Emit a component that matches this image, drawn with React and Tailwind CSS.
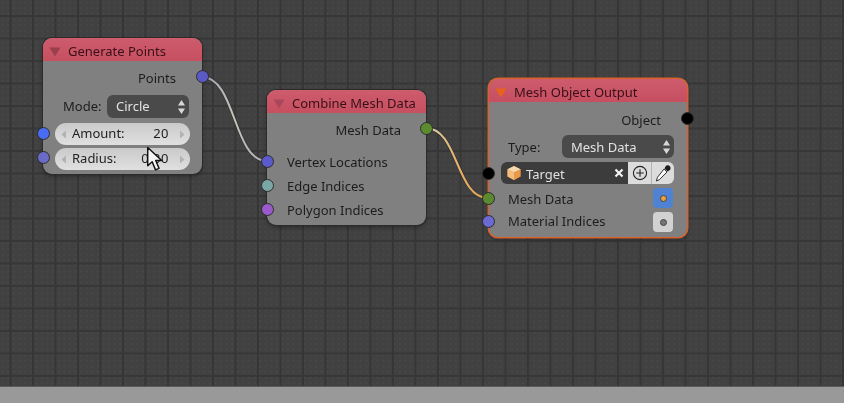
import React from 'react';

const font = { fontFamily: '"Noto Sans", "Open Sans", sans-serif' };

// free canvas: sockets sit on the node edge
const Socket = ({ side, y, color, nudge = 0 }) => (
  <span
    className={`absolute w-[13px] h-[13px] rounded-full border border-[#2c2c2c] ${side === 'left' ? 'left-[-6px]' : 'right-[-7px]'}`}
    style={{ top: y, background: color, marginLeft: nudge }}
  />
);

const NodeHeader = ({ title, triangle }) => (
  <div className="h-[23px] flex items-center pl-[6px] pt-[5px] rounded-t-[9px] bg-gradient-to-b from-[#cd5c6c] to-[#c64f60]">
    <svg width="12" height="10" viewBox="0 0 12 10" className="mr-[7px] shrink-0">
      <path d="M0.5 0.5 H11.5 L6 9.5 Z" fill={triangle} />
    </svg>
    <span className="text-[13px] text-[#38101a] whitespace-nowrap">{title}</span>
  </div>
);

const SpinArrows = () => (
  <svg width="9" height="16" viewBox="0 0 9 16" className="shrink-0">
    <path d="M4.5 1 L8 6.5 H1 Z M4.5 15 L8 9.5 H1 Z" fill="#d8d8d8" />
  </svg>
);

const Dropdown = ({ label, width, labelPad = 'pt-[1px]' }) => (
  <div className={`h-[23px] ${width} rounded-[6px] bg-[#4a4a4a] flex items-center justify-between pl-[9px] pr-[3px] text-[13px] text-[#e2e2e2]`}>
    <span className={labelPad}>{label}</span>
    <SpinArrows />
  </div>
);

const NumberField = ({ label, value }) => (
  <div className="h-[22px] rounded-full bg-gradient-to-b from-[#cacaca] to-[#e0e0e0] flex items-center pl-[6px] pr-[5px] text-[13px] text-[#1e1e1e]">
    <svg width="6" height="9" viewBox="0 0 6 9" className="shrink-0"><path d="M5 0.5 L0.5 4.5 L5 8.5 Z" fill="#b2b2b2" /></svg>
    <span className="ml-[5px]">{label}</span>
    <span className="ml-auto mr-[10px] tracking-[0.5px]">{value}</span>
    <svg width="6" height="9" viewBox="0 0 6 9" className="shrink-0"><path d="M1 0.5 L5.5 4.5 L1 8.5 Z" fill="#b2b2b2" /></svg>
  </div>
);

const Toggle = ({ active }) => (
  <div className={`w-[20px] h-[20px] rounded-[4px] flex items-center justify-center ${active ? 'bg-[#5082d4]' : 'bg-[#d2d2d2]'}`}>
    <span className={`w-[7px] h-[7px] rounded-full border border-[#444] ${active ? 'bg-[#eda040]' : 'bg-[#777]'}`} />
  </div>
);

const Cube = () => (
  <svg width="16" height="16" viewBox="0 0 15 16" className="shrink-0">
    <path d="M7.5 1 L14 4.2 V11.6 L7.5 15 L1 11.6 V4.2 Z" fill="#d98a3a" />
    <path d="M7.5 1 L14 4.2 L7.5 7.5 L1 4.2 Z" fill="#f5d8ae" />
    <path d="M7.5 7.5 L14 4.2 V11.6 L7.5 15 Z" fill="#e89a48" />
    <path d="M1 4.2 L7.5 7.5 V15 L1 11.6 Z" fill="#f3bd7c" />
  </svg>
);

const GeneratePoints = () => (
  <div className="absolute left-[43px] top-[38px] w-[159px] h-[136px] rounded-[9px] bg-[#808080] shadow-[0_0_0_1px_#2e2a2a,0_2px_4px_rgba(0,0,0,0.4)]">
    <NodeHeader title="Generate Points" triangle="#9c3f4c" />
    <div className="px-[12px] text-[13px] text-[#1c1c1c]">
      <div className="h-[24px] mt-[5px] flex items-center justify-end pr-[14px] pt-[1px]">Points</div>
      <div className="mt-[5px] flex items-center justify-between pl-[8px] pr-[1px]">
        <span>Mode:</span>
        <Dropdown label="Circle" width="w-[82px]" />
      </div>
      <div className="mt-[5px] flex flex-col gap-[3px]">
        <NumberField label="Amount:" value="20" />
        <NumberField label="Radius:" value="0.30" />
      </div>
    </div>
    <Socket side="right" y={32} color="#5a5ac6" />
    <Socket side="left" y={89} color="#4a6cf2" />
    <Socket side="left" y={113} color="#6a6ac8" />
  </div>
);

const CombineMeshData = () => (
  <div className="absolute left-[267px] top-[90px] w-[159px] h-[135px] rounded-[9px] bg-[#808080] shadow-[0_0_0_1px_#2e2a2a,0_2px_4px_rgba(0,0,0,0.4)]">
    <NodeHeader title="Combine Mesh Data" triangle="#a8485a" />
    <div className="text-[13px] text-[#1c1c1c]">
      <div className="h-[24px] mt-[6px] flex items-center justify-end pr-[25px]">Mesh Data</div>
      <div className="mt-[8px] pl-[20px] flex flex-col">
        <span className="h-[24px] flex items-center">Vertex Locations</span>
        <span className="h-[24px] flex items-center">Edge Indices</span>
        <span className="h-[24px] flex items-center">Polygon Indices</span>
      </div>
    </div>
    <Socket side="right" y={32} color="#5c8a30" />
    <Socket side="left" y={65} color="#5a5acc" />
    <Socket side="left" y={89} color="#7ba6a6" />
    <Socket side="left" y={113} color="#9a5acc" />
  </div>
);

const MeshObjectOutput = () => (
  <div className="absolute left-[489px] top-[79px] w-[198px] h-[158px] rounded-[9px] bg-[#808080] shadow-[0_0_0_1.5px_#d8622a,0_2px_4px_rgba(0,0,0,0.4)]">
    <NodeHeader title="Mesh Object Output" triangle="#e8641a" />
    <div className="pl-[12px] pr-[13px] text-[13px] text-[#1c1c1c]">
      <div className="h-[24px] mt-[7px] flex items-center justify-end pr-[13px]">Object</div>
      <div className="mt-[2px] flex items-center justify-between pl-[7px]">
        <span className="pt-[3px]">Type:</span>
        <Dropdown label="Mesh Data" width="w-[112px]" labelPad="pt-[3px]" />
      </div>
      <div className="mt-[4px] h-[22px] flex rounded-[6px] overflow-hidden">
        <div className="flex-1 bg-[#3c3c3c] flex items-center pl-[5px] pr-[4px] text-[#e0e0e0]">
          <Cube />
          <span className="ml-[4px] pt-[4px]">Target</span>
          <svg width="10" height="10" viewBox="0 0 10 10" className="ml-auto">
            <path d="M1.5 1.5 L8.5 8.5 M8.5 1.5 L1.5 8.5" stroke="#f2f2f2" strokeWidth="2.2" />
          </svg>
        </div>
        <div className="w-[23px] bg-[#dcdcdc] flex items-center justify-center">
          <svg width="16" height="16" viewBox="0 0 16 16" fill="none" stroke="#222" strokeWidth="1.1">
            <circle cx="8" cy="8" r="6.6" />
            <path d="M8 4.2 V11.8 M4.2 8 H11.8" />
          </svg>
        </div>
        <div className="w-[23px] bg-[#dcdcdc] border-l border-[#b4b4b4] flex items-center justify-center">
          <svg width="18" height="19" viewBox="0 0 18 19" fill="none">
            <path d="M11.5 2.5 C12.5 1 15 1 16 2.4 C17 3.8 16.6 5.5 15.2 6.5 L13.6 7.6 L10.5 4.4 Z" fill="#1c1c1c" />
            <path d="M10 5 L13 8 L5.5 15.6 L2.4 17 L3.4 13.4 Z" fill="#f8f8f8" stroke="#333" strokeWidth="1" />
          </svg>
        </div>
      </div>
      <div className="flex mt-[4px] h-[20px] items-center justify-between pl-[7px] pr-[1px]">
        <span className="pt-[3px]">Mesh Data</span>
        <Toggle active />
      </div>
      <div className="flex mt-[4px] h-[20px] items-center justify-between pl-[7px] pr-[1px]">
        <span>Material Indices</span>
        <Toggle />
      </div>
    </div>
    <Socket side="right" y={33} color="#000000" />
    <Socket side="left" y={88} color="#000000" nudge={-1} />
    <Socket side="left" y={113} color="#5c8a30" nudge={-1} />
    <Socket side="left" y={136} color="#6a6ad2" nudge={-1} />
  </div>
);

const Wires = () => (
  <svg width="844" height="386" className="absolute left-0 top-0">
    <defs>
      <linearGradient id="wireA" x1="0" y1="0" x2="1" y2="0">
        <stop offset="0" stopColor="#9f9fb4" />
        <stop offset="0.5" stopColor="#c4c4b8" />
        <stop offset="1" stopColor="#a8a8b8" />
      </linearGradient>
      <linearGradient id="wireB" x1="0" y1="0" x2="1" y2="0">
        <stop offset="0" stopColor="#d8d0b0" />
        <stop offset="0.6" stopColor="#e8ae60" />
        <stop offset="1" stopColor="#d8a050" />
      </linearGradient>
    </defs>
    <path d="M202 77 C236 77 233 161 267 161" fill="none" stroke="#2c2c2c" strokeWidth="3.5" opacity="0.5" />
    <path d="M202 77 C236 77 233 161 267 161" fill="none" stroke="url(#wireA)" strokeWidth="2" />
    <path d="M426 128 C458 128 456 198 488 198" fill="none" stroke="#2c2c2c" strokeWidth="3.5" opacity="0.5" />
    <path d="M426 128 C458 128 456 198 488 198" fill="none" stroke="url(#wireB)" strokeWidth="2" />
  </svg>
);

const Cursor = () => (
  <svg width="19" height="27" viewBox="0 0 18 26" className="absolute left-[146px] top-[146px]">
    <path d="M1.5 1.5 V19 L5.8 15.2 L9 23 L12.4 21.5 L9.2 14 H15 Z" fill="#f4f4f4" stroke="#111" strokeWidth="1.4" strokeLinejoin="round" />
  </svg>
);

export default function App() {
  return (
    <div className="w-[844px] h-[403px] flex flex-col overflow-hidden blur-[0.4px]" style={font}>
      <div className="relative flex-1 bg-[#414141] bg-[linear-gradient(to_right,#363636_1.5px,transparent_1.5px),linear-gradient(to_bottom,#373737_1.5px,transparent_1.5px),radial-gradient(circle,#474747_0.8px,transparent_1px)] bg-[size:22.5px_22.5px,22.5px_22.5px,5.6px_5.6px] bg-[position:9.5px_15px,9.5px_15px,0_0]">
        <Wires />
        <GeneratePoints />
        <CombineMeshData />
        <MeshObjectOutput />
        <Cursor />
      </div>
      <div className="h-[17px] bg-[#999999] border-t border-[#5a5a5a]" />
    </div>
  );
}
